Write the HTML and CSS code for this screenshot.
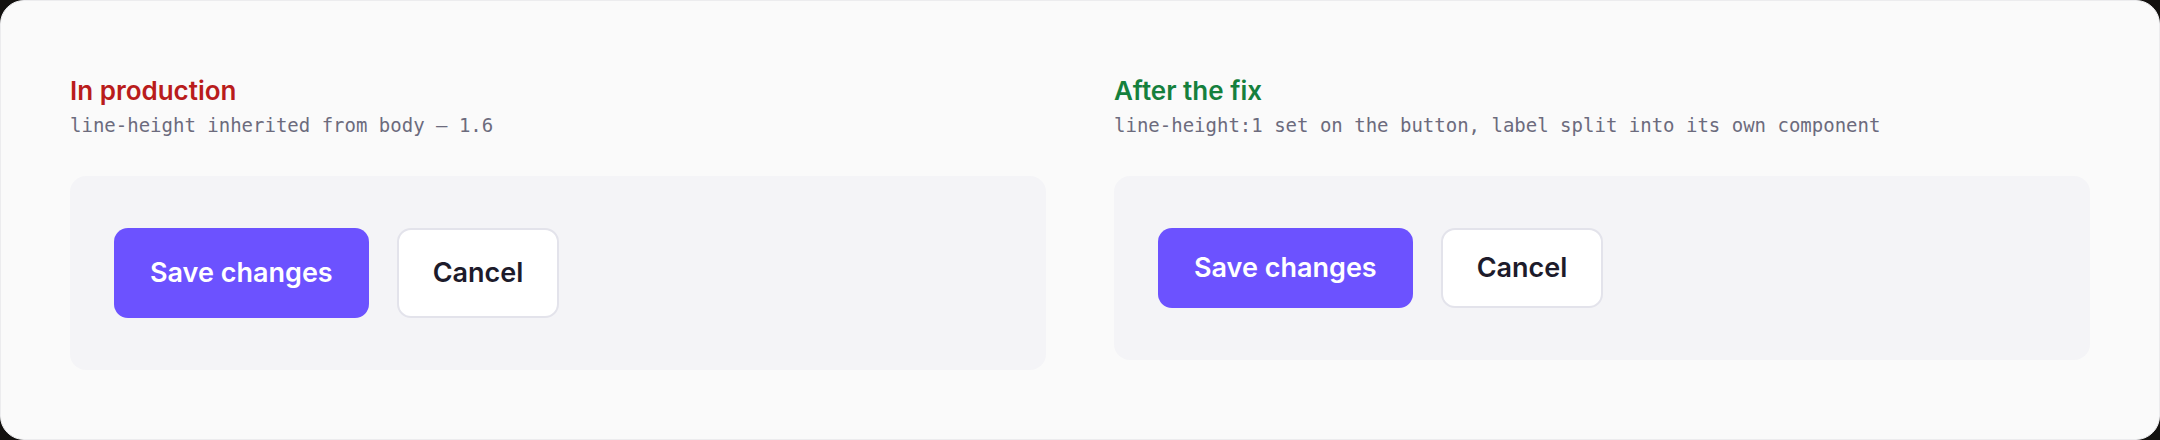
FILE: index.html
```html
<!DOCTYPE html>
<html lang="en">
<head>
<meta charset="utf-8">
<title>Button line-height comparison</title>
<link rel="stylesheet" href="styles.css">
</head>
<body>
<main class="card">
  <section class="column">
    <header class="col-head">
      <h2 class="title title-bad">In production</h2>
      <p class="note">line-height inherited from body — 1.6</p>
    </header>
    <div class="stage">
      <button class="btn btn-primary" type="button">Save changes</button>
      <button class="btn btn-secondary" type="button">Cancel</button>
    </div>
  </section>
  <section class="column">
    <header class="col-head">
      <h2 class="title title-good">After the fix</h2>
      <p class="note">line-height:1 set on the button, label split into its own component</p>
    </header>
    <div class="stage">
      <button class="btn btn-fixed btn-primary" type="button"><span class="btn-label">Save changes</span></button>
      <button class="btn btn-fixed btn-secondary" type="button"><span class="btn-label">Cancel</span></button>
    </div>
  </section>
</main>
</body>
</html>
```
FILE: styles.css
```css
* { box-sizing: border-box; }

html, body {
  margin: 0;
  padding: 0;
  height: 100%;
}

body {
  background: #13110f;
  font-family: Inter, "Noto Sans", sans-serif;
  line-height: 1.6;
  color: #1d1b2b;
}

.card {
  height: 440px;
  background: #fafafa;
  border: 1px solid #ececee;
  border-radius: 24px;
  padding: 69px 69px;
  display: grid;
  grid-template-columns: 1fr 1fr;
  column-gap: 68px;
  align-items: start;
}

.column {
  display: flex;
  flex-direction: column;
}

.col-head {
  margin-bottom: 36px;
}

.title {
  margin: 0;
  font-size: 26px;
  font-weight: 600;
  letter-spacing: 0;
}

.title-bad { color: #b91c1c; }
.title-good { color: #15803d; }

.note {
  margin: -2px 0 0;
  font-family: "DejaVu Sans Mono", "Liberation Mono", monospace;
  font-size: 19px;
  color: #6c6b7d;
}

.stage {
  background: #f4f4f7;
  border-radius: 16px;
  padding: 52px 44px;
  display: flex;
  align-items: flex-start;
  gap: 28px;
}

.btn {
  font-family: Inter, "Noto Sans", sans-serif;
  font-size: 27px;
  font-weight: 600;
  line-height: inherit;
  padding: 21.4px 34px;
  border: 2px solid transparent;
  border-radius: 14px;
  cursor: pointer;
}

.btn-primary {
  background: #6c52ff;
  color: #ffffff;
}

.btn-secondary {
  background: #ffffff;
  border-color: #e3e3eb;
  color: #1d1b2b;
}

.btn-fixed {
  line-height: 1;
  padding: 24.5px 34px;
}

.btn-label {
  display: block;
}
```
